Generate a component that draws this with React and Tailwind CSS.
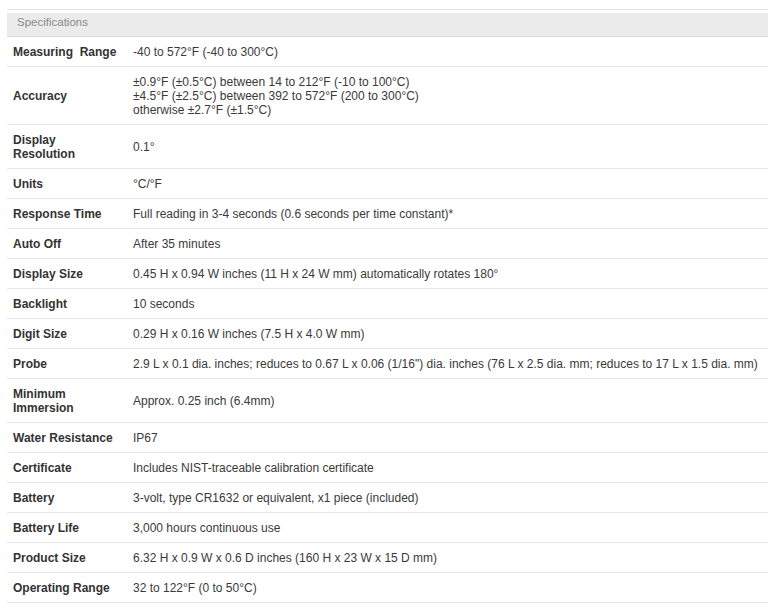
import React from "react";

const specs = [
  ["Measuring\u00a0 Range", ["-40 to 572°F (-40 to 300°C)"]],
  [
    "Accuracy",
    [
      "±0.9°F (±0.5°C) between 14 to 212°F (-10 to 100°C)",
      "±4.5°F (±2.5°C) between 392 to 572°F (200 to 300°C)",
      "otherwise ±2.7°F (±1.5°C)",
    ],
  ],
  ["Display Resolution", ["0.1°"]],
  ["Units", ["°C/°F"]],
  ["Response Time", ["Full reading in 3-4 seconds (0.6 seconds per time constant)*"]],
  ["Auto Off", ["After 35 minutes"]],
  ["Display Size", ["0.45 H x 0.94 W inches (11 H x 24 W mm) automatically rotates 180°"]],
  ["Backlight", ["10 seconds"]],
  ["Digit Size", ["0.29 H x 0.16 W inches (7.5 H x 4.0 W mm)"]],
  [
    "Probe",
    ["2.9 L x 0.1 dia. inches; reduces to 0.67 L x 0.06 (1/16\") dia. inches (76 L x 2.5 dia. mm; reduces to 17 L x 1.5 dia. mm)"],
  ],
  ["Minimum Immersion", ["Approx. 0.25 inch (6.4mm)"]],
  ["Water Resistance", ["IP67"]],
  ["Certificate", ["Includes NIST-traceable calibration certificate"]],
  ["Battery", ["3-volt, type CR1632 or equivalent, x1 piece (included)"]],
  ["Battery Life", ["3,000 hours continuous use"]],
  ["Product Size", ["6.32 H x 0.9 W x 0.6 D inches (160 H x 23 W x 15 D mm)"]],
  ["Operating Range", ["32 to 122°F (0 to 50°C)"]],
];

export default function App() {
  return (
    <div
      className="w-[768px] h-[610px] bg-white pt-[9px] pl-[7px] overflow-hidden"
      style={{ fontFamily: '"Liberation Sans", Arial, sans-serif' }}
    >
      {/* Header */}
      <div className="border-t border-[#e6e6e6] pt-[3px]">
        <div className="h-[24px] bg-[#ebebeb] border-b border-[#dadada] flex items-center pl-[10px] pb-[3px] text-[11.5px] text-[#8a8a8a]">
          Specifications
        </div>
      </div>

      {/* Rows */}
      {specs.map(([label, lines]) => (
        <div key={label} className="flex border-b border-[#e6e6e6] text-[12px] leading-[14px]">
          <div className="w-[120px] shrink-0 pl-[6px] pr-[8px] pt-[8px] pb-[7px] font-bold text-[#333] flex items-center">
            {label}
          </div>
          <div className="flex-1 pl-[6px] pt-[8px] pb-[7px] text-[#3a3a3a] flex flex-col justify-center whitespace-nowrap">
            {lines.map((l) => (
              <span key={l}>{l}</span>
            ))}
          </div>
        </div>
      ))}
    </div>
  );
}
